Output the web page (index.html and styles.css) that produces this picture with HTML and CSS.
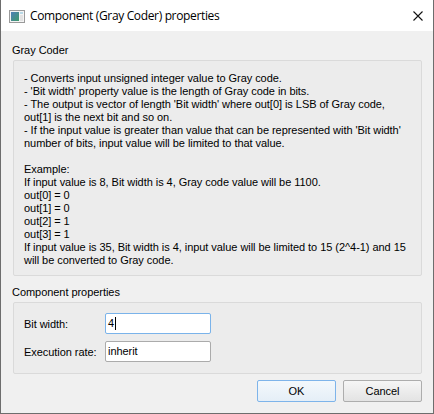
FILE: index.html
```html
<!DOCTYPE html>
<html>
<head>
<meta charset="utf-8">
<link rel="stylesheet" href="styles.css">
</head>
<body>
<div class="window">
  <div class="titlebar">
    <svg class="app-icon" width="16" height="13" viewBox="0 0 16 13">
      <rect x="0.5" y="0.5" width="15" height="12" fill="#f4f4f4" stroke="#9a9a9a"/>
      <rect x="2" y="2" width="8" height="9" fill="url(#g)"/>
      <rect x="11" y="2" width="3" height="2" fill="#b8d8e6"/>
      <rect x="11" y="5" width="3" height="6" fill="#e2e2e2"/>
      <defs>
        <linearGradient id="g" x1="0" y1="0" x2="1" y2="1">
          <stop offset="0" stop-color="#4f7fb8"/>
          <stop offset="1" stop-color="#3f9a6a"/>
        </linearGradient>
      </defs>
    </svg>
    <span class="title">Component (Gray Coder) properties</span>
    <svg class="close" width="10" height="10" viewBox="0 0 10 10">
      <path d="M0.5 0.5 L9.5 9.5 M9.5 0.5 L0.5 9.5" stroke="#111" stroke-width="1.1" fill="none"/>
    </svg>
  </div>
  <div class="content">
    <div class="group-label">Gray Coder</div>
    <div class="group desc">
      <div>- Converts input unsigned integer value to Gray code.</div>
      <div>- 'Bit width' property value is the length of Gray code in bits.</div>
      <div>- The output is vector of length 'Bit width' where out[0] is LSB of Gray code,</div>
      <div>out[1] is the next bit and so on.</div>
      <div>- If the input value is greater than value that can be represented with 'Bit width'</div>
      <div>number of bits, input value will be limited to that value.</div>
      <div>&nbsp;</div>
      <div>Example:</div>
      <div>If input value is 8, Bit width is 4, Gray code value will be 1100.</div>
      <div>out[0] = 0</div>
      <div>out[1] = 0</div>
      <div>out[2] = 1</div>
      <div>out[3] = 1</div>
      <div>If input value is 35, Bit width is 4, input value will be limited to 15 (2^4-1) and 15</div>
      <div>will be converted to Gray code.</div>
    </div>
    <div class="group-label second">Component properties</div>
    <div class="group props">
      <div class="row">
        <span class="label">Bit width:</span>
        <div class="field focused">4<span class="caret"></span></div>
      </div>
      <div class="row">
        <span class="label">Execution rate:</span>
        <div class="field">inherit</div>
      </div>
    </div>
    <div class="buttons">
      <div class="btn default">OK</div>
      <div class="btn">Cancel</div>
    </div>
  </div>
</div>
</body>
</html>
```
FILE: styles.css
```css
html, body {
  margin: 0;
  padding: 0;
  background: #f0f0f0;
}
.window {
  width: 434px;
  height: 414px;
  box-sizing: border-box;
  border: 1px solid #6d6d6d;
  border-top: none;
  background: #f0f0f0;
  font-family: "Liberation Sans", Arial, sans-serif;
  font-size: 11px;
  letter-spacing: -0.05px;
  color: #000;
}
.titlebar {
  height: 31px;
  background: #fff;
  display: flex;
  align-items: center;
}
.app-icon {
  margin-left: 8px;
  margin-top: 1px;
}
.title {
  margin-left: 5px;
  font-family: "Open Sans", "Noto Sans", sans-serif;
  font-size: 12px;
  letter-spacing: -0.35px;
  color: #000;
}
.close {
  margin-left: auto;
  margin-right: 10px;
}
.content {
  padding: 13px 11px 0 11px;
}
.group-label {
  line-height: 13px;
  height: 13px;
  margin-bottom: 3px;
}
.group-label.second {
  margin-top: 10px;
}
.group {
  margin-left: 1px;
  border: 1px solid #dadada;
  border-radius: 2px;
  background: #ececec;
}
.desc {
  padding: 11px 10px 8px 10px;
  line-height: 13px;
  white-space: nowrap;
  height: 195px;
}
.props {
  padding: 10px 10px 11px 10px;
  display: flex;
  flex-direction: column;
  gap: 7px;
}
.row {
  display: flex;
  align-items: center;
  height: 21px;
}
.label {
  width: 81px;
}
.field {
  width: 106px;
  height: 21px;
  box-sizing: border-box;
  border: 1px solid #ababab;
  border-radius: 2px;
  background: #fff;
  padding: 0 2px;
  line-height: 19px;
  display: flex;
  align-items: center;
}
.field.focused {
  border-color: #7ab3ea;
}
.caret {
  display: inline-block;
  width: 1px;
  height: 13px;
  background: #000;
  margin-left: 1px;
}
.buttons {
  display: flex;
  justify-content: flex-end;
  gap: 7px;
  margin-top: 6px;
}
.btn {
  width: 79px;
  height: 22px;
  box-sizing: border-box;
  border: 1px solid #adadad;
  border-radius: 2px;
  background: linear-gradient(#f6f6f6, #e3e3e3);
  display: flex;
  align-items: center;
  justify-content: center;
}
.btn.default {
  border-color: #7eb4ea;
  background: linear-gradient(#f3f8fc, #e5eef7);
}
```
